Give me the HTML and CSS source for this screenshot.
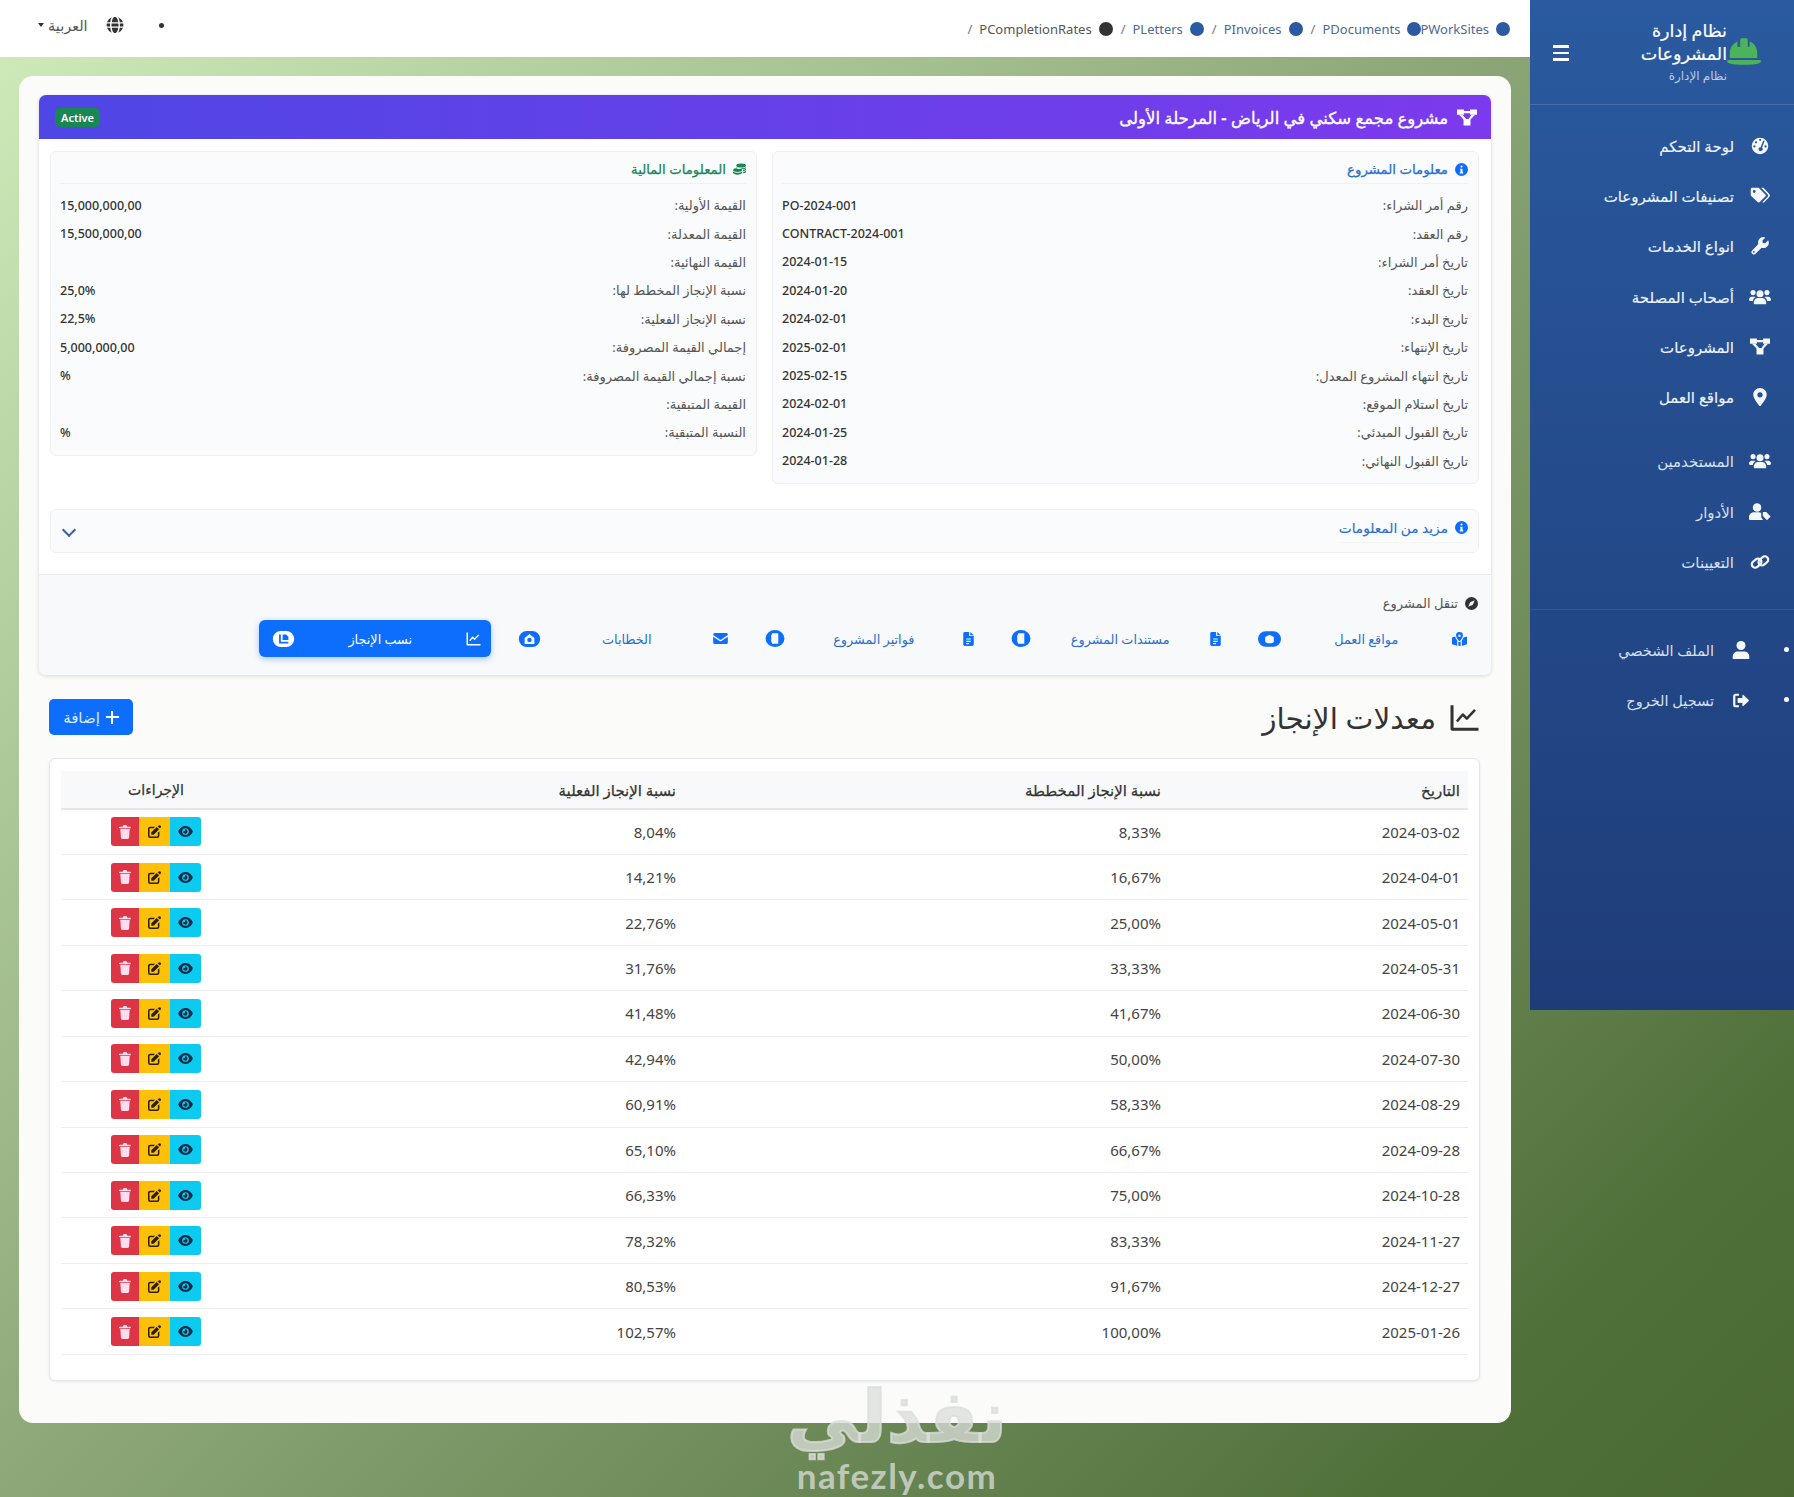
FILE: index.html
```html
<!DOCTYPE html>
<html lang="ar" dir="rtl">
<head>
<meta charset="utf-8">
<title>معدلات الإنجاز</title>
<link rel="stylesheet" href="styles.css">
</head>
<body>
<svg class="sprite" xmlns="http://www.w3.org/2000/svg">
  <symbol id="i-tach" viewBox="0 0 24 24"><path fill-rule="evenodd" d="M12 1a11 11 0 1 0 0 22 11 11 0 0 0 0-22zM10.800 3.800a1.400 1.400 0 1 0 2.800 0 1.400 1.400 0 0 0-2.800 0zM5.200 7a1.500 1.500 0 1 0 3 0 1.500 1.500 0 0 0-3 0zM3 12.500a1.500 1.500 0 1 0 3 0 1.500 1.500 0 0 0-3 0zM18 12.500a1.500 1.500 0 1 0 3 0 1.500 1.500 0 0 0-3 0zM16 5.500l-3.200 8a2.600 2.600 0 1 0 1.900.8l3.100-8a1 1 0 1 0-1.800-.8z"/></symbol>
  <symbol id="i-tags" viewBox="0 0 26 22"><path d="M2 1h8.500c.6 0 1 .2 1.400.6l8 8c.8.8.8 2 0 2.800l-7.200 7.200c-.8.8-2 .8-2.800 0l-8.300-8c-.4-.4-.6-.8-.6-1.400V3c0-1.100.9-2 1.500-2zM5.500 4a1.800 1.800 0 1 0 0 3.600 1.800 1.800 0 0 0 0-3.600z" fill-rule="evenodd"/><path d="M14.500 1h2.200c.5 0 1 .2 1.400.6l7 7.500c1.100 1.200 1.100 2.700 0 3.800l-6.600 7c-.7.700-1.700.700-2.400 0l6.600-7c1-1.100 1-2.400 0-3.400z"/></symbol>
  <symbol id="i-wrench" viewBox="0 0 24 24"><path d="M23.300 5.300c-.1-.5-.7-.6-1-.3l-3.400 3.400-3.200-.5-.5-3.200 3.400-3.400c.3-.3.2-.9-.3-1a7 7 0 0 0-8.500 9L1.600 18a3.100 3.100 0 1 0 4.400 4.400l8.200-8.200a7 7 0 0 0 9.100-8.900zM3.800 21a1.200 1.200 0 1 1 0-2.500 1.200 1.200 0 0 1 0 2.500z" fill-rule="evenodd"/></symbol>
  <symbol id="i-users" viewBox="0 0 30 24"><circle cx="5.500" cy="6" r="3.500"/><circle cx="24.500" cy="6" r="3.500"/><circle cx="15" cy="7.500" r="4.800"/><path d="M8 22c-1 0-1.500-.5-1.500-1.500 0-4 2.500-7 5.500-7h6c3 0 5.500 3 5.500 7 0 1-.5 1.500-1.500 1.500z"/><path d="M0 15.500c0-2 1.500-4 3.500-4h3.500c.8 0 1.400.2 2 .6-2 1.200-3.500 3.200-3.800 5.400H1.500C.5 17.500 0 16.500 0 15.500zM30 15.500c0-2-1.500-4-3.500-4H23c-.8 0-1.400.2-2 .6 2 1.200 3.500 3.200 3.800 5.400h3.700c1 0 1.500-1 1.500-2z"/></symbol>
  <symbol id="i-diagram" viewBox="0 0 26 22"><path d="M0 .5h9v7H0zM17 .5h9v7h-9zM8.500 13h9v8.500h-9z"/><path d="M9 2.500h8v3H9zM2.500 7.500h4.500l5.500 6H8.500zM23.500 7.500H19l-4.500 6h3z"/></symbol>
  <symbol id="i-pin" viewBox="0 0 18 24"><path fill-rule="evenodd" d="M9 0C4 0 0 4 0 9c0 4.500 6 12 8 14.500.5.700 1.500.700 2 0C12 21 18 13.500 18 9c0-5-4-9-9-9zm0 5.500a3.500 3.500 0 1 1 0 7 3.500 3.500 0 0 1 0-7z"/></symbol>
  <symbol id="i-usertag" viewBox="0 0 30 24"><circle cx="11" cy="6" r="5.800"/><path d="M0 22v-3c0-3.500 3-6.500 6.500-6.500h7c1.200 0 2.300.3 3.200.9V19l2.500 3.800c-.3.100-.7.200-1.200.200H1c-.6 0-1-.4-1-1z"/><path d="M19 12h4.500l6 6.200-5 5-5.800-6z"/></symbol>
  <symbol id="i-link" viewBox="0 0 26 24"><g fill="none" stroke="currentColor" stroke-width="3"><rect x="1.500" y="9" width="14" height="9" rx="4.500" transform="rotate(-40 8.500 13.500)"/><rect x="10.500" y="6" width="14" height="9" rx="4.500" transform="rotate(-40 17.500 10.500)"/></g></symbol>
  <symbol id="i-user" viewBox="0 0 22 24"><circle cx="11" cy="6" r="6"/><path d="M0 24v-3.500C0 17 3 14 6.500 14h9c3.500 0 6.500 3 6.500 6.500V24z"/></symbol>
  <symbol id="i-signout" viewBox="0 0 24 22"><path d="M9 1H4C2 1 .5 2.500.5 4.500v13C.5 19.500 2 21 4 21h5v-3H4.500c-.4 0-.8-.4-.8-.8V4.800c0-.4.4-.8.800-.8H9z"/><path d="M14 3.500c0-.7.800-1.100 1.400-.6l8 7.300c.4.400.4 1.100 0 1.500l-8 7.300c-.6.500-1.400.100-1.400-.6V14.500H8a1 1 0 0 1-1-1v-5a1 1 0 0 1 1-1h6z"/></symbol>
  <symbol id="i-globe" viewBox="0 0 24 24"><path d="M7.700 8.200C8.200 4 10 1 12 1s3.800 3 4.300 7.200zM16.600 10c.1.700.1 1.400.1 2s0 1.300-.1 2H7.400a20 20 0 0 1 0-4zM18.300 8.200c-.3-2.700-1-5-2.100-6.500a11 11 0 0 1 6.500 6.500zM7.800 1.700C6.700 3.200 6 5.500 5.700 8.200H1.300a11 11 0 0 1 6.500-6.500zM23 10a12 12 0 0 1 0 4h-4.600a24 24 0 0 0 0-4zM5.500 10a24 24 0 0 0 0 4H1a12 12 0 0 1 0-4zM7.700 15.800h8.600C15.800 20 14 23 12 23s-3.800-3-4.300-7.200zM16.200 22.300c1.100-1.500 1.800-3.800 2.100-6.500h4.400a11 11 0 0 1-6.500 6.500zM7.800 22.300a11 11 0 0 1-6.500-6.500h4.400c.3 2.700 1 5 2.100 6.500z"/></symbol>
  <symbol id="i-info" viewBox="0 0 24 24"><path fill-rule="evenodd" d="M12 0a12 12 0 1 0 0 24 12 12 0 0 0 0-24zm0 4.500a2 2 0 1 1 0 4 2 2 0 0 1 0-4zM9.500 10.500h3.500a1 1 0 0 1 1 1V17h1.200v2.200H8.800V17H10v-4.300H9.500z"/></symbol>
  <symbol id="i-coins" viewBox="0 0 24 24"><ellipse cx="15" cy="4.500" rx="9" ry="3.700"/><path d="M6 9.500c1.800 1.100 5 1.600 9 1.600s6.800-.5 9-1.600V7.800c-2.200 1.500-5 2-9 2s-7-.5-9-2zM0 13c0-2 4-3.700 8.500-3.700s8.500 1.700 8.500 3.700-4 3.700-8.500 3.700S0 15 0 13zM0 15.500c2 1.600 5 2.400 8.500 2.400s6.500-.8 8.500-2.400v2.500C17 20 13 21.500 8.500 21.500S0 20 0 18zM18.500 12.500c2.500-.3 4.200-1 5.500-2V13c-1.300 1-3 1.700-5.500 2zM18.500 16.500c2.500-.3 4.200-1 5.500-2V17c-1.300 1-3 1.700-5.500 2z"/></symbol>
  <symbol id="i-compass" viewBox="0 0 24 24"><path fill-rule="evenodd" d="M12 0a12 12 0 1 0 0 24 12 12 0 0 0 0-24zm6 6l-3.500 8.500L6 18l3.500-8.500z"/></symbol>
  <symbol id="i-map" viewBox="0 0 26 24"><path fill-rule="evenodd" d="M13 0a6 6 0 0 0-6 6c0 3 4 8 6 10.500C15 14 19 9 19 6a6 6 0 0 0-6-6zm0 4a2.200 2.200 0 1 1 0 4.400A2.200 2.200 0 0 1 13 4z"/><path d="M0 9.500L5.500 7.500 6 9.500c.6 1.700 1.700 3.500 3 5.300V23.500l-9-2.500zM11 16.500c1 1.200 3 1.200 4 0V24l-4-.5zM17 14.800c1.300-1.800 2.400-3.600 3-5.300l6-2V21l-9 3z"/></symbol>
  <symbol id="i-file" viewBox="0 0 18 24"><path fill-rule="evenodd" d="M0 2.500A2.500 2.500 0 0 1 2.500 0H10v7h8v14.500a2.500 2.500 0 0 1-2.500 2.500h-13A2.500 2.500 0 0 1 0 21.500zM5 11v2h8v-2zM5 15v2h8v-2zM5 19v2h5v-2z"/><path d="M12 0l6 5.500h-6z"/></symbol>
  <symbol id="i-env" viewBox="0 0 24 18"><path d="M2.500 0h19A2.500 2.500 0 0 1 24 2.500v.8l-12 8-12-8v-.8A2.500 2.500 0 0 1 2.500 0zM0 6l11 7.300c.6.400 1.400.400 2 0L24 6v9.500a2.500 2.500 0 0 1-2.500 2.500h-19A2.500 2.500 0 0 1 0 15.500z"/></symbol>
  <symbol id="i-chart" viewBox="0 0 24 24"><path d="M0 1h2.600v19.400H24V23H1.500A1.500 1.500 0 0 1 0 21.500z"/><path d="M5.500 15l5-6 3.500 3.500 7-7.500" fill="none" stroke="currentColor" stroke-width="2.200" stroke-linejoin="round"/></symbol>
  <symbol id="i-blob-a" viewBox="0 0 24 16"><path fill-rule="evenodd" d="M8 0h8a8 8 0 0 1 0 16H8A8 8 0 0 1 8 0zm4 3.500L7.500 6v4.500c0 1 2 2 4.500 2s4.500-1 4.500-2V6z"/></symbol>
  <symbol id="i-blob-b" viewBox="0 0 20 18"><path fill-rule="evenodd" d="M10 0a10 9 0 1 0 0 18 10 9 0 0 0 0-18zM7 3.500h6.500v11H7l-1-2.500v-6z"/></symbol>
  <symbol id="i-blob-c" viewBox="0 0 24 18"><path fill-rule="evenodd" d="M9 0h6a9 9 0 0 1 0 18H9A9 9 0 0 1 9 0zm3 3.500L6.500 8v6.500h11V8zM12 7.500a2.500 2.500 0 1 1 0 5 2.500 2.500 0 0 1 0-5z"/></symbol>
  <symbol id="i-blob-d" viewBox="0 0 24 18"><path fill-rule="evenodd" d="M9 0h6a9 9 0 0 1 0 18H9A9 9 0 0 1 9 0zM7 4v10h10.500v-2H9V4zM11 4v6h6.500V6.500L15 4z"/></symbol>
  <symbol id="i-trash" viewBox="0 0 20 24"><path d="M6.500 1.500C6.800.600 7.500 0 8.500 0h3c1 0 1.700.6 2 1.500L14 3h5a1.200 1.200 0 0 1 0 2.500H1A1.200 1.200 0 0 1 1 3h5z"/><path d="M2 7h16l-1 14.500c-.1 1.400-1.200 2.500-2.500 2.500h-9c-1.300 0-2.400-1.100-2.500-2.500z"/></symbol>
  <symbol id="i-edit" viewBox="0 0 24 24"><path d="M20.500.9a2.500 2.500 0 0 1 3.300 3.300L22 6.500 17.500 2zM16 3.500L20.500 8 10.500 18H6v-4.500z"/><path d="M4 3h9l-2.500 2.800H4.300c-.8 0-1.500.7-1.500 1.500v12.400c0 .8.700 1.500 1.500 1.500h12.400c.8 0 1.500-.7 1.500-1.500V14l2.800-2.500V20a4 4 0 0 1-4 4H4a4 4 0 0 1-4-4V7a4 4 0 0 1 4-4z"/></symbol>
  <symbol id="i-eye" viewBox="0 0 24 18"><path fill-rule="evenodd" d="M12 0C6 0 2 4.500.3 8a2 2 0 0 0 0 2C2 13.500 6 18 12 18s10-4.500 11.700-8a2 2 0 0 0 0-2C22 4.500 18 0 12 0zM6.500 9a5.500 5.500 0 1 1 11 0 5.500 5.500 0 0 1-11 0zM12 5.500c-.3 0-.6 0-.9.100.5.800.3 1.900-.4 2.600-.7.700-1.800.900-2.600.4A3.500 3.500 0 1 0 12 5.500z"/></symbol>
  <symbol id="i-helmet" viewBox="0 0 36 28"><path d="M14 1.500c0-.8.700-1.500 1.500-1.500h5c.8 0 1.500.7 1.500 1.500V9h2V3.500c5 2 8 6.500 8 12V21H3v-5.500c0-5 3-9.500 8-12V9h3z"/><path d="M1.500 23h33c1 0 1.500.5 1.500 1.200 0 2-4 3.800-18 3.800S0 26.200 0 24.200c0-.7.500-1.200 1.500-1.200z"/></symbol>
</svg>

<div class="shell">
  <aside class="sidebar">
    <div class="brand">
      <div class="brand-text">
        <div class="brand-row">
          <svg class="helmet"><use href="#i-helmet"/></svg>
          <div class="brand-title">نظام إدارة<br>المشروعات</div>
        </div>
        <div class="brand-sub">نظام الإدارة</div>
      </div>
      <span class="burger"><i></i><i></i><i></i></span>
    </div>
    <nav class="menu menu-main">
      <a class="menu-item"><span class="mi"><svg class="ic-tach"><use href="#i-tach"/></svg></span><span>لوحة التحكم</span></a>
      <a class="menu-item"><span class="mi"><svg class="ic-tags"><use href="#i-tags"/></svg></span><span>تصنيفات المشروعات</span></a>
      <a class="menu-item"><span class="mi"><svg class="ic-tach"><use href="#i-wrench"/></svg></span><span>انواع الخدمات</span></a>
      <a class="menu-item"><span class="mi"><svg class="ic-users"><use href="#i-users"/></svg></span><span>أصحاب المصلحة</span></a>
      <a class="menu-item"><span class="mi"><svg class="ic-tags"><use href="#i-diagram"/></svg></span><span>المشروعات</span></a>
      <a class="menu-item"><span class="mi"><svg class="ic-pin"><use href="#i-pin"/></svg></span><span>مواقع العمل</span></a>
    </nav>
    <nav class="menu menu-second">
      <a class="menu-item"><span class="mi"><svg class="ic-users"><use href="#i-users"/></svg></span><span>المستخدمين</span></a>
      <a class="menu-item"><span class="mi"><svg class="ic-users"><use href="#i-usertag"/></svg></span><span>الأدوار</span></a>
      <a class="menu-item"><span class="mi"><svg class="ic-users"><use href="#i-link"/></svg></span><span>التعيينات</span></a>
    </nav>
    <ul class="menu-user">
      <li class="user-item"><span class="mi"><svg class="ic-tach"><use href="#i-user"/></svg></span><span>الملف الشخصي</span></li>
      <li class="user-item"><span class="mi"><svg class="ic-out"><use href="#i-signout"/></svg></span><span>تسجيل الخروج</span></li>
    </ul>
  </aside>

  <div class="main">
    <header class="topbar">
      <ol class="crumbs">
        <li class="crumb"><a>PWorkSites</a></li>
        <li class="crumb crumb-tight"><a>PDocuments</a></li>
        <li class="sep">/</li>
        <li class="crumb"><a>PInvoices</a></li>
        <li class="sep">/</li>
        <li class="crumb"><a>PLetters</a></li>
        <li class="sep">/</li>
        <li class="crumb crumb-current"><a>PCompletionRates</a></li>
        <li class="sep">/</li>
      </ol>
      <div class="tools">
        <span class="tool-dot"></span>
        <svg class="globe"><use href="#i-globe"/></svg>
        <span class="lang">العربية</span>
        <span class="caret"></span>
      </div>
    </header>

    <main class="content">
      <section class="project">
        <div class="project-head">
          <h2 class="project-title"><svg class="ic-head"><use href="#i-diagram"/></svg>مشروع مجمع سكني في الرياض - المرحلة الأولى</h2>
          <span class="badge">Active</span>
        </div>
        <div class="project-body">
          <div class="info-grid">
            <div class="info-card">
              <h3 class="info-title blue"><svg class="ic-info"><use href="#i-info"/></svg>معلومات المشروع</h3>
              <div class="row"><span class="k">رقم أمر الشراء:</span><span class="v">PO-2024-001</span></div>
              <div class="row"><span class="k">رقم العقد:</span><span class="v">CONTRACT-2024-001</span></div>
              <div class="row"><span class="k">تاريخ أمر الشراء:</span><span class="v">2024-01-15</span></div>
              <div class="row"><span class="k">تاريخ العقد:</span><span class="v">2024-01-20</span></div>
              <div class="row"><span class="k">تاريخ البدء:</span><span class="v">2024-02-01</span></div>
              <div class="row"><span class="k">تاريخ الإنتهاء:</span><span class="v">2025-02-01</span></div>
              <div class="row"><span class="k">تاريخ انتهاء المشروع المعدل:</span><span class="v">2025-02-15</span></div>
              <div class="row"><span class="k">تاريخ استلام الموقع:</span><span class="v">2024-02-01</span></div>
              <div class="row"><span class="k">تاريخ القبول المبدئي:</span><span class="v">2024-01-25</span></div>
              <div class="row"><span class="k">تاريخ القبول النهائي:</span><span class="v">2024-01-28</span></div>
            </div>
            <div class="info-card">
              <h3 class="info-title green"><svg class="ic-info"><use href="#i-coins"/></svg>المعلومات المالية</h3>
              <div class="row"><span class="k">القيمة الأولية:</span><span class="v">15,000,000,00</span></div>
              <div class="row"><span class="k">القيمة المعدلة:</span><span class="v">15,500,000,00</span></div>
              <div class="row"><span class="k">القيمة النهائية:</span><span class="v"></span></div>
              <div class="row"><span class="k">نسبة الإنجاز المخطط لها:</span><span class="v">25,0%</span></div>
              <div class="row"><span class="k">نسبة الإنجاز الفعلية:</span><span class="v">22,5%</span></div>
              <div class="row"><span class="k">إجمالي القيمة المصروفة:</span><span class="v">5,000,000,00</span></div>
              <div class="row"><span class="k">نسبة إجمالي القيمة المصروفة:</span><span class="v">%</span></div>
              <div class="row"><span class="k">القيمة المتبقية:</span><span class="v"></span></div>
              <div class="row"><span class="k">النسبة المتبقية:</span><span class="v">%</span></div>
            </div>
          </div>
          <div class="more">
            <h3 class="more-title blue"><svg class="ic-info"><use href="#i-info"/></svg>مزيد من المعلومات</h3>
            <span class="chev"></span>
          </div>
        </div>
        <div class="project-nav">
          <div class="nav-title"><svg class="ic-compass"><use href="#i-compass"/></svg>تنقل المشروع</div>
          <div class="nav-items">
            <a class="nav-item"><svg class="ni ni-map"><use href="#i-map"/></svg><span>مواقع العمل</span><svg class="nb nb-wide"><use href="#i-blob-a"/></svg></a>
            <a class="nav-item"><svg class="ni ni-file"><use href="#i-file"/></svg><span>مستندات المشروع</span><svg class="nb"><use href="#i-blob-b"/></svg></a>
            <a class="nav-item"><svg class="ni ni-file"><use href="#i-file"/></svg><span>فواتير المشروع</span><svg class="nb"><use href="#i-blob-b"/></svg></a>
            <a class="nav-item"><svg class="ni ni-env"><use href="#i-env"/></svg><span>الخطابات</span><svg class="nb nb-wide"><use href="#i-blob-c"/></svg></a>
            <a class="nav-item active"><svg class="ni ni-map"><use href="#i-chart"/></svg><span>نسب الإنجاز</span><svg class="nb nb-wide"><use href="#i-blob-d"/></svg></a>
          </div>
        </div>
      </section>

      <section class="rates">
        <div class="rates-head">
          <h1 class="rates-title"><svg class="ic-rates"><use href="#i-chart"/></svg>معدلات الإنجاز</h1>
          <a class="add-btn"><span class="plus"></span>إضافة</a>
        </div>
        <div class="table-card">
          <table class="table">
            <colgroup><col class="c1"><col class="c2"><col class="c3"><col class="c4"></colgroup>
            <thead><tr><th>التاريخ</th><th>نسبة الإنجاز المخططة</th><th>نسبة الإنجاز الفعلية</th><th class="th-act">الإجراءات</th></tr></thead>
            <tbody id="rows">
              <tr><td>2024-03-02</td><td>8,33%</td><td>8,04%</td><td class="act"><span class="btns"><a class="b b-view"><svg><use href="#i-eye"/></svg></a><a class="b b-edit"><svg><use href="#i-edit"/></svg></a><a class="b b-del"><svg><use href="#i-trash"/></svg></a></span></td></tr>
              <tr><td>2024-04-01</td><td>16,67%</td><td>14,21%</td><td class="act"><span class="btns"><a class="b b-view"><svg><use href="#i-eye"/></svg></a><a class="b b-edit"><svg><use href="#i-edit"/></svg></a><a class="b b-del"><svg><use href="#i-trash"/></svg></a></span></td></tr>
              <tr><td>2024-05-01</td><td>25,00%</td><td>22,76%</td><td class="act"><span class="btns"><a class="b b-view"><svg><use href="#i-eye"/></svg></a><a class="b b-edit"><svg><use href="#i-edit"/></svg></a><a class="b b-del"><svg><use href="#i-trash"/></svg></a></span></td></tr>
              <tr><td>2024-05-31</td><td>33,33%</td><td>31,76%</td><td class="act"><span class="btns"><a class="b b-view"><svg><use href="#i-eye"/></svg></a><a class="b b-edit"><svg><use href="#i-edit"/></svg></a><a class="b b-del"><svg><use href="#i-trash"/></svg></a></span></td></tr>
              <tr><td>2024-06-30</td><td>41,67%</td><td>41,48%</td><td class="act"><span class="btns"><a class="b b-view"><svg><use href="#i-eye"/></svg></a><a class="b b-edit"><svg><use href="#i-edit"/></svg></a><a class="b b-del"><svg><use href="#i-trash"/></svg></a></span></td></tr>
              <tr><td>2024-07-30</td><td>50,00%</td><td>42,94%</td><td class="act"><span class="btns"><a class="b b-view"><svg><use href="#i-eye"/></svg></a><a class="b b-edit"><svg><use href="#i-edit"/></svg></a><a class="b b-del"><svg><use href="#i-trash"/></svg></a></span></td></tr>
              <tr><td>2024-08-29</td><td>58,33%</td><td>60,91%</td><td class="act"><span class="btns"><a class="b b-view"><svg><use href="#i-eye"/></svg></a><a class="b b-edit"><svg><use href="#i-edit"/></svg></a><a class="b b-del"><svg><use href="#i-trash"/></svg></a></span></td></tr>
              <tr><td>2024-09-28</td><td>66,67%</td><td>65,10%</td><td class="act"><span class="btns"><a class="b b-view"><svg><use href="#i-eye"/></svg></a><a class="b b-edit"><svg><use href="#i-edit"/></svg></a><a class="b b-del"><svg><use href="#i-trash"/></svg></a></span></td></tr>
              <tr><td>2024-10-28</td><td>75,00%</td><td>66,33%</td><td class="act"><span class="btns"><a class="b b-view"><svg><use href="#i-eye"/></svg></a><a class="b b-edit"><svg><use href="#i-edit"/></svg></a><a class="b b-del"><svg><use href="#i-trash"/></svg></a></span></td></tr>
              <tr><td>2024-11-27</td><td>83,33%</td><td>78,32%</td><td class="act"><span class="btns"><a class="b b-view"><svg><use href="#i-eye"/></svg></a><a class="b b-edit"><svg><use href="#i-edit"/></svg></a><a class="b b-del"><svg><use href="#i-trash"/></svg></a></span></td></tr>
              <tr><td>2024-12-27</td><td>91,67%</td><td>80,53%</td><td class="act"><span class="btns"><a class="b b-view"><svg><use href="#i-eye"/></svg></a><a class="b b-edit"><svg><use href="#i-edit"/></svg></a><a class="b b-del"><svg><use href="#i-trash"/></svg></a></span></td></tr>
              <tr><td>2025-01-26</td><td>100,00%</td><td>102,57%</td><td class="act"><span class="btns"><a class="b b-view"><svg><use href="#i-eye"/></svg></a><a class="b b-edit"><svg><use href="#i-edit"/></svg></a><a class="b b-del"><svg><use href="#i-trash"/></svg></a></span></td></tr>
            </tbody>
          </table>
        </div>
      </section>
    </main>
  </div>
</div>
<div class="watermark"><div class="wm-ar">نفذلي</div><div class="wm-en">nafezly.com</div></div>
</body>
</html>
```
FILE: styles.css
```css
* { box-sizing: border-box; }
html, body { margin: 0; padding: 0; }
body {
  width: 1794px;
  height: 1497px;
  overflow: hidden;
  position: relative;
  font-family: "Noto Sans", "DejaVu Sans", sans-serif;
  font-size: 14px;
  color: #333;
  background: linear-gradient(135deg, #d0ecbb 0%, #8ea87a 45%, #50703a 87.500%, #4a6a32 100%);
}
.sprite { position: absolute; width: 0; height: 0; }
svg { fill: currentColor; display: block; flex: none; }
a { color: inherit; text-decoration: none; }
h1, h2, h3, ol, ul { margin: 0; padding: 0; list-style: none; }
.shell { display: flex; align-items: flex-start; }

/* sidebar */
.sidebar {
  width: 264px;
  height: 1010px;
  flex: none;
  color: #fff;
  background: linear-gradient(180deg, #2a5a9f 0%, #1e3c78 100%);
}
.brand {
  height: 105px;
  display: flex;
  align-items: flex-start;
  justify-content: space-between;
  padding: 19px 33px 0 23px;
  border-bottom: 1px solid rgba(255,255,255,.14);
}
.brand-row { display: flex; align-items: flex-end; }
.helmet { width: 34px; height: 27px; color: #4db35a; margin-bottom: -1px; }
.brand-title { font-size: 17.500px; font-weight: 500; line-height: 22.500px; -webkit-text-stroke: .2px #fff; }
.brand-sub { font-size: 12px; line-height: 18px; margin-top: 3px; padding-right: 34px; color: #b9cbe6; }
.burger { display: flex; flex-direction: column; gap: 4px; width: 16px; margin-top: 26px; }
.burger i { display: block; height: 2.500px; background: #fff; }
.menu { padding: 0 22px; }
.menu-main { padding-top: 15.500px; }
.menu-second { padding-top: 14px; padding-bottom: 21.500px; border-bottom: 1px solid rgba(255,255,255,.08); }
.menu-item {
  height: 50.300px;
  display: flex;
  align-items: center;
  gap: 14px;
  font-size: 15px;
  font-weight: 500;
  color: #eef3fb;
  -webkit-text-stroke: .15px currentColor;
}
.mi { width: 24px; display: flex; justify-content: center; color: #f4f7fc; }
.menu-second .menu-item { font-weight: 400; color: #d6e0f0; -webkit-text-stroke: 0; }
.ic-tach { width: 18px; height: 18px; }
.ic-tags { width: 20px; height: 17px; }
.ic-users { width: 22px; height: 18px; }
.ic-pin { width: 14px; height: 18px; }
.ic-out { width: 18px; height: 15px; }
.menu-user { padding: 15px 41px 0 0; }
.user-item {
  height: 50.500px;
  display: flex;
  align-items: center;
  gap: 15px;
  font-size: 14.500px;
  color: #d6e0f0;
  position: relative;
}
.user-item::before {
  content: "";
  position: absolute;
  right: -36px;
  top: 22px;
  width: 5px;
  height: 5px;
  border-radius: 50%;
  background: #fff;
}

/* top bar */
.main { flex: 1; min-width: 0; }
.topbar {
  height: 57px;
  background: #fff;
  display: flex;
  align-items: center;
  justify-content: space-between;
  padding: 0 20px 0 38px;
}
.crumbs { display: flex; align-items: center; font-size: 13px; color: #4d6a8f; }
.crumb { display: flex; align-items: center; gap: 7px; }
.crumb::before {
  content: "";
  width: 14px;
  height: 14px;
  border-radius: 50%;
  background: #2c5aa0;
}
.crumb-tight { margin-right: -1px; }
.crumb-current { color: #555; }
.crumb-current::before { background: #333; }
.sep { color: #777; margin: 0 7px 0 8px; }
.tools { display: flex; align-items: center; padding-bottom: 7px; }
.tool-dot { width: 5px; height: 5px; border-radius: 50%; background: #333; margin-left: 35px; }
.globe { width: 18px; height: 18px; color: #333; margin-left: 18px; }
.lang { font-size: 14.500px; color: #555; }
.caret { border-top: 4px solid #333; border-left: 3.500px solid transparent; border-right: 3.500px solid transparent; margin-right: 4px; }

/* content */
.content {
  margin: 19px 19px 0;
  height: 1347px;
  padding: 19px 20px 0 20px;
  background: #fbfbfa;
  border-radius: 14px;
}
.project {
  height: 580px;
  background: #fff;
  border-radius: 7px;
  box-shadow: 0 1px 4px rgba(0,0,0,.14);
  overflow: hidden;
}
.project-head {
  height: 44px;
  display: flex;
  align-items: center;
  justify-content: space-between;
  padding: 0 14px 0 16px;
  color: #fff;
  background: linear-gradient(90deg, #4f46e5 0%, #7c3aed 100%);
}
.project-title { display: flex; align-items: center; gap: 9px; font-size: 16.500px; font-weight: 500; -webkit-text-stroke: .35px #fff; }
.ic-head { width: 20px; height: 17px; }
.badge { background: #198754; color: #fff; font-size: 11px; font-weight: 600; padding: 2px 6px; border-radius: 5px; line-height: 15px; }
.project-body { padding: 12px 12px 21px 11px; height: 435px; }
.info-grid { display: grid; grid-template-columns: 1fr 1fr; gap: 15px; align-items: start; height: 346px; }
.info-card {
  background: #fafbfc;
  border: 1px solid #eef0f3;
  border-radius: 6px;
  padding: 0 10px 8px 9px;
}
.info-title {
  height: 32px;
  padding-top: 3px;
  display: flex;
  align-items: center;
  gap: 7px;
  font-size: 13.300px;
  font-weight: 500;
  -webkit-text-stroke: .25px currentColor;
  border-bottom: 1px solid #f0f1f3;
  margin-bottom: 7px;
}
.blue { color: #2b6fcc; }
.green { color: #198754; }
.ic-info { width: 13px; height: 13px; }
.blue svg { color: #0d6efd; -webkit-text-stroke: 0; }
.row {
  height: 28.400px;
  display: flex;
  align-items: center;
  justify-content: space-between;
  font-size: 13px;
}
.k { color: #555; }
.v { color: #333; font-weight: 500; direction: ltr; font-size: 12.500px; }
.more {
  height: 44px;
  background: #fafbfc;
  border: 1px solid #eef0f3;
  border-radius: 6px;
  padding: 0 10px 0 13px;
  display: flex;
  justify-content: space-between;
  position: relative;
  margin-top: 12px;
}
.more-title {
  height: 33px;
  padding-top: 3px;
  display: flex;
  align-items: center;
  gap: 7px;
  font-size: 13.700px;
  font-weight: 500;
  -webkit-text-stroke: .15px currentColor;
  border-bottom: 1px solid #f4f5f7;
}
.chev {
  width: 10px;
  height: 10px;
  border-left: 2px solid #3a5f9f;
  border-bottom: 2px solid #3a5f9f;
  transform: rotate(-45deg);
  margin-top: 15px;
}
.project-nav {
  height: 101px;
  background: #f8f9fb;
  border-top: 1px solid #e9ecef;
  padding: 17px 14px 0 10px;
}
.nav-title { display: flex; align-items: center; gap: 7px; font-size: 13px; color: #555; height: 22px; margin-right: -1px; }
.ic-compass { width: 13px; height: 13px; color: #333; }
.nav-items { display: flex; gap: 14.500px; margin-top: 6px; }
.nav-item {
  width: 232px;
  height: 37px;
  display: flex;
  align-items: center;
  justify-content: space-between;
  padding: 0 10px 0 12.500px;
  font-size: 12.800px;
  color: #2b6fcc;
  border-radius: 6px;
}
.nav-item svg { color: #0d6efd; }
.ni-map { width: 15px; height: 14px; }
.ni-file { width: 11px; height: 14px; }
.ni-env { width: 15px; height: 11px; }
.nb { width: 20px; height: 17px; }
.nb-wide { width: 23px; height: 16px; }
.nav-item.active {
  background: #0d6efd;
  color: #fff;
  box-shadow: 0 2px 6px rgba(13,110,253,.35);
}
.nav-item.active svg { color: #fff; }

/* rates */
.rates { padding: 24px 11px 0 10px; }
.rates-head { display: flex; align-items: center; justify-content: space-between; height: 36px; }
.rates-title { display: flex; align-items: center; gap: 13px; font-size: 29.600px; font-weight: 400; color: #333; line-height: 38px; padding-top: 2px; }
.ic-rates { width: 31px; height: 28px; }
.add-btn {
  width: 84px;
  height: 36px;
  display: flex;
  align-items: center;
  justify-content: center;
  gap: 6px;
  border-radius: 5px;
  background: #0d6efd;
  color: #dce9ff;
  font-size: 15px;
}
.plus { width: 13px; height: 13px; background: linear-gradient(#fff,#fff) center/100% 2px no-repeat, linear-gradient(#fff,#fff) center/2px 100% no-repeat; }
.table-card {
  margin-top: 23px;
  height: 623px;
  background: #fff;
  border: 1px solid #e4e6e9;
  border-radius: 6px;
  padding: 12px 11px;
  box-shadow: 0 1px 3px rgba(0,0,0,.07);
}
.table { width: 100%; border-collapse: collapse; table-layout: fixed; }
.c1 { width: 299px; }
.c2 { width: 485px; }
.c3 { width: 433px; }
th {
  height: 38px;
  padding: 0 8px;
  text-align: right;
  font-size: 15px;
  font-weight: 500;
  -webkit-text-stroke: .25px currentColor;
  color: #333;
  background: #f8f9fa;
  border-bottom: 2px solid #e4e6e9;
}
th.th-act { font-size: 14px; }
td {
  height: 45.450px;
  padding: 0 8px;
  font-size: 15px;
  color: #444;
  border-bottom: 1px solid #eceef0;
}
.th-act, .act { text-align: center; }
.btns { display: inline-flex; vertical-align: middle; }
.b { height: 29px; width: 31px; display: flex; align-items: center; justify-content: center; }
.b-view svg { width: 15px; height: 11px; }
.b-edit svg { width: 13px; height: 13px; }
.b-del svg { width: 12px; height: 14px; }
.b-view { background: #0dcaf0; color: #0b2c48; border-radius: 0 3px 3px 0; }
.b-edit { background: #ffc107; color: #2a2000; }
.b-del { width: 28px; background: #dc3545; color: #fde; border-radius: 3px 0 0 3px; }

/* watermark */
.watermark {
  position: absolute;
  left: 780px;
  top: 1378px;
  width: 234px;
  text-align: center;
  color: rgba(218,222,218,.76);
  direction: ltr;
  pointer-events: none;
}
.wm-ar { font-family: "DejaVu Sans", sans-serif; font-weight: 700; font-size: 72px; line-height: 79px; direction: rtl; -webkit-text-stroke: 2px rgba(218,222,218,.76); }
.wm-en { font-family: "Lato", sans-serif; font-weight: 700; font-size: 35px; line-height: 36px; letter-spacing: 1.500px; }
```
